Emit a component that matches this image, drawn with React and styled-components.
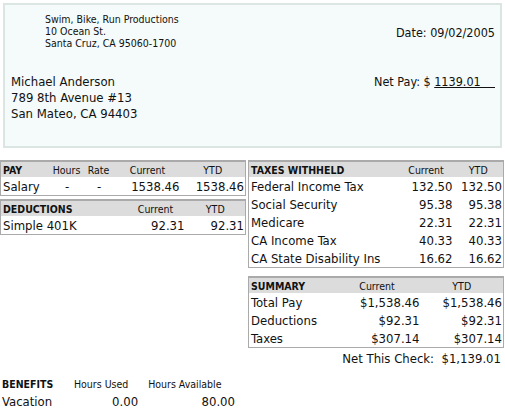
import React from "react";
import styled, { createGlobalStyle } from "styled-components";

const Global = createGlobalStyle`
  body { margin: 0; background: #fff; font-family: "DejaVu Sans Condensed", "DejaVu Sans", sans-serif; color: #111; }
`;

const Page = styled.div` width: 505px; height: 412px; overflow: hidden; `;
const Header = styled.div`
  margin: 3px 3px 0 3px; height: 145px; box-sizing: border-box;
  background: #f4fbfa; border: 2px solid #dbe6e2;
  display: grid; grid-template-columns: 1fr auto; grid-template-rows: 62px auto;
  padding: 0 5px 0 6px;
`;
const Company = styled.div` font-size: 10.5px; line-height: 12px; padding: 8px 0 0 34px; `;
const DateT = styled.div` font-size: 12.5px; padding-top: 20px; text-align: right; `;
const Emp = styled.div` font-size: 13px; line-height: 16px; padding-top: 7px; `;
const Net = styled.div` font-size: 12.5px; padding-top: 7px; text-align: right; `;
const U = styled.span` text-decoration: underline; `;

const Body = styled.div` display: flex; gap: 3px; margin-top: 12px; `;
const Col = styled.div` width: ${p => p.$w}px; display: flex; flex-direction: column; gap: ${p => p.$g || 3}px; `;
const Table = styled.table`
  width: 100%; border-collapse: collapse; border: 1px solid #aaa; font-size: 13px;
  table-layout: fixed;
  th { background: #dcdcdc; font-size: 10.5px; font-weight: normal; height: 15px; padding: 0 2px; border-top: 2px solid #aaa; }
  th:first-child { text-align: left; font-weight: bold; }
  td { height: 18px; padding: 0 1px 0 2px; text-align: right; }
  td:first-child { text-align: left; }
`;
const Center = styled.td` && { text-align: center; } `;
const NetCheck = styled.div` font-size: 13px; text-align: right; padding: 3px 2px 0 0; `;
const Benefits = styled.table`
  margin-top: 140px; border-collapse: collapse; font-size: 13px;
  th { font-size: 10.5px; font-weight: normal; text-align: left; padding: 0 8px 4px 0; }
  th:first-child { font-weight: bold; padding-left: 2px; padding-right: 8px; }
  td { text-align: right; padding: 0 10px 0 0; }
  td:first-child { text-align: left; padding-left: 2px; }
`;

export default function App() {
  return (
    <Page>
      <Global />
      <Header>
        <Company>Swim, Bike, Run Productions<br />10 Ocean St.<br />Santa Cruz, CA 95060-1700</Company>
        <DateT>Date: 09/02/2005</DateT>
        <Emp>Michael Anderson<br />789 8th Avenue #13<br />San Mateo, CA 94403</Emp>
        <Net>Net Pay: $ <U>1139.01&nbsp;&nbsp;&nbsp;&nbsp;</U></Net>
      </Header>
      <Body>
        <Col $w={245}>
          <Table>
            <colgroup><col width="50" /><col width="32" /><col width="32" /><col width="66" /><col width="65" /></colgroup>
            <thead><tr><th>PAY</th><th>Hours</th><th>Rate</th><th>Current</th><th>YTD</th></tr></thead>
            <tbody><tr><td>Salary</td><Center>-</Center><Center>-</Center><td>1538.46</td><td>1538.46</td></tr></tbody>
          </Table>
          <Table>
            <colgroup><col width="125" /><col width="60" /><col width="60" /></colgroup>
            <thead><tr><th>DEDUCTIONS</th><th>Current</th><th>YTD</th></tr></thead>
            <tbody><tr><td>Simple 401K</td><td>92.31</td><td>92.31</td></tr></tbody>
          </Table>
          <Benefits>
            <thead><tr><th>BENEFITS</th><th>Hours Used</th><th>Hours Available</th></tr></thead>
            <tbody><tr><td>Vacation</td><td>0.00</td><td>80.00</td></tr></tbody>
          </Benefits>
        </Col>
        <Col $w={255} $g={8}>
          <Table>
            <colgroup><col width="150" /><col width="55" /><col width="50" /></colgroup>
            <thead><tr><th>TAXES WITHHELD</th><th>Current</th><th>YTD</th></tr></thead>
            <tbody>
              <tr><td>Federal Income Tax</td><td>132.50</td><td>132.50</td></tr>
              <tr><td>Social Security</td><td>95.38</td><td>95.38</td></tr>
              <tr><td>Medicare</td><td>22.31</td><td>22.31</td></tr>
              <tr><td>CA Income Tax</td><td>40.33</td><td>40.33</td></tr>
              <tr><td>CA State Disability Ins</td><td>16.62</td><td>16.62</td></tr>
            </tbody>
          </Table>
          <div>
            <Table>
              <colgroup><col width="85" /><col width="87" /><col width="83" /></colgroup>
              <thead><tr><th>SUMMARY</th><th>Current</th><th>YTD</th></tr></thead>
              <tbody>
                <tr><td>Total Pay</td><td>$1,538.46</td><td>$1,538.46</td></tr>
                <tr><td>Deductions</td><td>$92.31</td><td>$92.31</td></tr>
                <tr><td>Taxes</td><td>$307.14</td><td>$307.14</td></tr>
              </tbody>
            </Table>
            <NetCheck>Net This Check:&nbsp; $1,139.01</NetCheck>
          </div>
        </Col>
      </Body>
    </Page>
  );
}
